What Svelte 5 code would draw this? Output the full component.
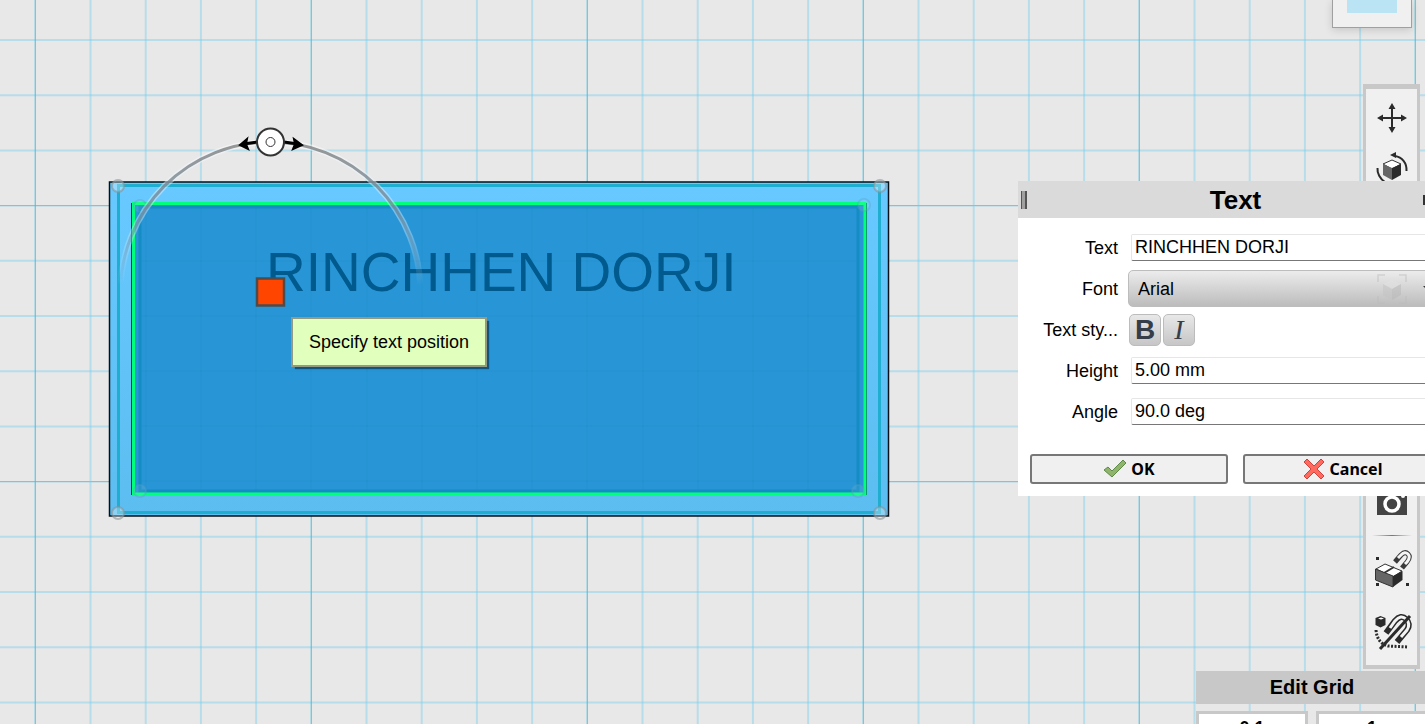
<script>
  // Grid spacing of the work plane; every fifth line is a major one
  const STEP = 55.2
  const cols = Array.from({ length: 48 }, (_, i) => ({ p: 35.3 + i * STEP, major: i % 5 === 0 }))
  const rows = Array.from({ length: 32 }, (_, i) => ({ p: 40 + i * STEP, major: i % 5 === 3 }))

  const outerKnobs = [[118, 186], [880, 186], [118, 513], [880, 513]]
  const innerKnobs = [[140, 206], [864, 205], [140, 491], [858, 491]]

  let text = $state('RINCHHEN DORJI')
  let font = $state('Arial')
  let height = $state('5.00 mm')
  let angle = $state('90.0 deg')
  let bold = $state(false)
  let italic = $state(false)
  let gridMinor = $state('0.1')
  let gridMajor = $state('1')
</script>

<main>
  <svg class="canvas" role="img" aria-label="Sketch plane">
    <defs>
      <linearGradient id="rim" x1="0" y1="0" x2="0" y2="1">
        <stop offset="0" stop-color="#67c9ff" />
        <stop offset="1" stop-color="#5cbdf1" />
      </linearGradient>
      <linearGradient id="arcDark" gradientUnits="userSpaceOnUse" x1="0" y1="142" x2="0" y2="285">
        <stop offset="0" stop-color="#8c8c8c" stop-opacity="0.9" />
        <stop offset="0.5" stop-color="#5d7484" stop-opacity="0.6" />
        <stop offset="1" stop-color="#5a7f98" stop-opacity="0" />
      </linearGradient>
      <linearGradient id="arcLight" gradientUnits="userSpaceOnUse" x1="0" y1="142" x2="0" y2="285">
        <stop offset="0" stop-color="#fff" stop-opacity="0.5" />
        <stop offset="0.6" stop-color="#cfeaff" stop-opacity="0.45" />
        <stop offset="1" stop-color="#cfeaff" stop-opacity="0" />
      </linearGradient>
    </defs>

    <!-- Grid -->
    {#each rows as r}
      <line x1="0" x2="100%" y1={r.p} y2={r.p} class="grid" class:grid--major={r.major} />
    {/each}
    {#each cols as c}
      <line y1="0" y2="100%" x1={c.p} x2={c.p} class="grid" class:grid--major={c.major} />
    {/each}

    <!-- Plate -->
    <rect x="109.5" y="182" width="779" height="334" fill="url(#rim)" stroke="#061018" stroke-width="1.5" />
    <rect x="118.5" y="185.5" width="761" height="327" fill="none" stroke="#20aed0" stroke-width="3" />
    {#each outerKnobs as [x, y]}
      <circle cx={x} cy={y} r="6" class="knob" />
    {/each}

    <!-- Pocket -->
    <rect x="132" y="204" width="734" height="290" fill="#2896d6" stroke="#0b3a63" stroke-width="2" />
    <rect x="140" y="207" width="718" height="284" fill="none" stroke="#148cc4" stroke-width="3" />
    {#each [146, 201, 256, 311, 367, 422, 477, 532, 587, 643, 698, 753, 808] as x}
      <line x1={x} x2={x} y1="208" y2="490" class="ghost" />
    {/each}
    {#each [261, 316, 371, 426, 481] as y}
      <line x1="141" x2="857" y1={y} y2={y} class="ghost" />
    {/each}
    <rect x="133.5" y="203.5" width="731.5" height="290.5" fill="none" stroke="#00ff7b" stroke-width="3" />
    {#each innerKnobs as [x, y]}
      <circle cx={x} cy={y} r="6" class="knob knob--faint" />
    {/each}

    <text x="266" y="291" class="sketch-text">{text}</text>

    <!-- Rotation arc with its handle -->
    <path d="M120.5 292A150 150 0 0 1 420.5 292" fill="none" stroke="url(#arcLight)" stroke-width="6" />
    <path d="M120.5 292A150 150 0 0 1 420.5 292" fill="none" stroke="url(#arcDark)" stroke-width="3" />
    <g stroke="#000" stroke-width="3" fill="none">
      <path d="M257 142L243 144M284 142L298 144" />
      <path d="M247 139L240 145L248 149L246 144zM294 139L302 145L293 149L295 144z" fill="#000" stroke-width="2" />
    </g>
    <circle cx="270.5" cy="142" r="13.5" fill="#fff" stroke="#333" stroke-width="2" />
    <circle cx="270.5" cy="142" r="4.5" fill="none" stroke="#333" />

    <rect x="257" y="278.5" width="27" height="27" fill="#ff4500" stroke="#4c4c4c" stroke-width="2.5" />
  </svg>

  <div class="hint" role="tooltip">Specify text position</div>

  <div class="view-cube"><span></span></div>

  <nav class="tools" aria-label="Tools">
    <div class="tool-group">
      <button aria-label="Move">
        <svg viewBox="0 0 36 36">
          <path d="M18 6V30M6 18H30" stroke="#2b2b2b" stroke-width="2" />
          <path d="M18 3l-3.5 6h7zM18 33l-3.5-6h7zM3 18l6-3.5v7zM33 18l-6-3.5v7z" fill="#2b2b2b" />
        </svg>
      </button>
      <button aria-label="Rotate">
        <svg viewBox="0 0 36 36">
          <path d="M3.5 16C3 21 6 27 11 30M32.5 19C33 11 28 5 21 4" fill="none" stroke="#2b2b2b" stroke-width="2" />
          <path d="M16 3l6-3v6z" fill="#2b2b2b" />
          <path d="M9 12l9-4 9 4-9 5z" fill="#fff" stroke="#333" />
          <path d="M9 12l9 4v12l-9-5z" fill="#666" />
          <path d="M27 12l-9 4v12l9-5z" fill="#2b2b2b" />
        </svg>
      </button>
    </div>
    <div class="tool-group">
      <button aria-label="Camera">
        <svg viewBox="0 0 36 36">
          <path d="M3 7h8l3-4h8l3 4h8v25H3z" fill="#444" />
          <circle cx="18" cy="21" r="7" fill="none" stroke="#fff" stroke-width="3.5" />
          <circle cx="29" cy="13" r="2" fill="#fff" />
        </svg>
      </button>
      <hr />
      <button aria-label="Snap to body">
        <svg viewBox="0 0 36 36">
          <path d="M2 17l9-5 17 7-9 6z" fill="#fff" stroke="#333" />
          <path d="M10 21l10-6" stroke="#333" stroke-width="2" />
          <path d="M1.5 17L19 24V35L1.5 28z" fill="#666" stroke="#333" />
          <path d="M28.5 19L19 24V35l9.5-7z" fill="#2b2b2b" />
          <path d="M21 10L27 3Q31-1 34 2T33 10L28 16" fill="none" stroke="#3a3a3a" stroke-width="5" />
          <path d="M24 6L27 3Q31-1 34 2T33 10L31 12" fill="none" stroke="#f4f4f4" stroke-width="3" />
          <path d="M2 5h3v3H2zM2 31h3v3H2zM32 31h3v3h-3z" fill="#2b2b2b" />
        </svg>
      </button>
      <button aria-label="Disable snapping">
        <svg viewBox="0 0 36 36">
          <path d="M1.5 4l5-2 5 2v7l-5 2.5-5-2.5z" fill="#2b2b2b" />
          <path d="M4 4.5l3-1 3 1-3 1z" fill="#fff" />
          <path d="M2 16Q3 29 14 32L34 33" fill="none" stroke="#2b2b2b" stroke-width="3" stroke-dasharray="2 1.5" />
          <path d="M12 19L21 7Q27 0 32 5T33 16L23 28" fill="none" stroke="#2b2b2b" stroke-width="6" />
          <path d="M16 14L21 7Q27 0 32 5T33 16L27 23" fill="none" stroke="#f4f4f4" stroke-width="3" />
          <path d="M6 35L36 2" stroke="#2b2b2b" stroke-width="3" />
        </svg>
      </button>
    </div>
  </nav>

  <form class="panel" onsubmit={e => e.preventDefault()}>
    <header>
      <i class="grip"></i>
      <h2>Text</h2>
      <i class="pin"></i>
    </header>

    <div class="fields">
      <label for="t-text">Text</label>
      <input id="t-text" bind:value={text} />

      <label for="t-font">Font</label>
      <div class="select-wrap">
        <select id="t-font" bind:value={font}>
          <option>Arial</option>
        </select>
        <svg class="ghost-cube" viewBox="0 0 30 30">
          <path d="M1 8V1h7M22 1h7v7M29 22v7h-7M8 29H1v-7" fill="none" stroke="#bdbdbd" stroke-width="1.5" />
          <path d="M6 10l9-4 9 4-9 5z" fill="#e2e2e2" />
          <path d="M6 10l9 5v11l-9-5z" fill="#c4c4c4" />
          <path d="M24 10l-9 5v11l9-5z" fill="#b8b8b8" />
        </svg>
        <i class="caret"></i>
      </div>

      <span class="label">Text sty...</span>
      <div class="styles">
        <button type="button" class="b" aria-pressed={bold} onclick={() => bold = !bold}>B</button>
        <button type="button" class="i" aria-pressed={italic} onclick={() => italic = !italic}>I</button>
      </div>

      <label for="t-height">Height</label>
      <input id="t-height" bind:value={height} />

      <label for="t-angle">Angle</label>
      <input id="t-angle" bind:value={angle} />
    </div>

    <footer>
      <button type="submit">
        <svg viewBox="0 0 24 20">
          <path d="M1 11l4-3 4 4L20 1l3 3L9 18z" fill="#8fb56c" stroke="#5d8a45" />
        </svg>
        OK
      </button>
      <button type="button">
        <svg viewBox="0 0 24 20">
          <path d="M5 0l7 7 7-7 3 3-7 7 7 7-3 3-7-7-7 7-3-3 7-7-7-7z" fill="#ff6a60" stroke="#d2423c" />
        </svg>
        Cancel
      </button>
    </footer>
  </form>

  <section class="edit-grid">
    <h3>Edit Grid</h3>
    <div class="cells">
      <input aria-label="Minor step" bind:value={gridMinor} />
      <input aria-label="Major step" bind:value={gridMajor} />
    </div>
  </section>
</main>

<style>
  :global(body) { margin: 0; }

  main {
    position: relative;
    height: 100vh;
    overflow: hidden;
    background: #e8e8e8;
    font-family: "Liberation Sans", Arial, sans-serif;
    font-size: 18px;
    color: #000;
  }

  button, input, select {
    font: inherit;
    color: inherit;
    box-sizing: border-box;
    margin: 0;
  }

  /* Canvas */
  .canvas {
    display: block;
    width: 100%;
    height: 100%;
  }

  .grid        { stroke: #74cdec; stroke-opacity: 0.42; stroke-width: 2; }
  .grid--major { stroke: #3fbde0; stroke-opacity: 0.7; stroke-width: 1.4; }
  .ghost       { stroke: #1d86c4; stroke-opacity: 0.2; stroke-width: 2; }

  .knob        { fill: #fff; fill-opacity: 0.3; stroke: #8a9298; stroke-opacity: 0.6; stroke-width: 2; }
  .knob--faint { fill-opacity: 0.08; stroke: #5b9fc0; stroke-opacity: 0.35; }

  .sketch-text {
    font-size: 55px;
    fill: #005a8d;
  }

  .hint {
    position: absolute;
    left: 291px;
    top: 317px;
    padding: 12px 16px;
    border: 2px solid #949b82;
    background: #e1ffbd;
    box-shadow: 3px 3px 1px -1px rgba(0, 40, 70, 0.6);
    line-height: 22px;
    white-space: nowrap;
  }

  .view-cube {
    position: absolute;
    right: 13px;
    top: 0;
    padding: 0 14px 14px;
    border: 1px solid #a0a0a0;
    border-top: 0;
    background: #f0f0f0;
    box-shadow: 0 2px 8px rgba(0, 0, 0, 0.15);
  }

  .view-cube span {
    display: block;
    width: 50px;
    height: 13px;
    background: #bae4f3;
  }

  /* Toolbar */
  .tools {
    position: absolute;
    right: 5px;
    top: 84px;
    box-sizing: border-box;
    width: 57px;
    height: 585px;
    padding: 11px 0 15px;
    border: 4px solid #c8c8c8;
    border-width: 5px 3px 4px;
    background: #f0f0f0;
    display: flex;
    flex-direction: column;
    justify-content: space-between;
  }

  .tool-group {
    display: flex;
    flex-direction: column;
    align-items: center;
    gap: 16px;
  }

  .tool-group:last-child button:last-child { margin-top: 10px; }

  .tools button {
    padding: 0;
    border: 0;
    background: none;
  }

  .tools svg {
    display: block;
    width: 36px;
    height: 36px;
    overflow: visible;
  }

  .tools hr {
    width: 40px;
    height: 1px;
    margin: 0;
    border: 0;
    background: linear-gradient(90deg, transparent, #777, transparent);
  }

  /* Text panel: runs past the right edge of the window */
  .panel {
    position: absolute;
    right: -28px;
    top: 181px;
    width: 435px;
    background: #fff;
  }

  .panel header {
    display: grid;
    grid-template-columns: 28px 1fr 28px;
    align-items: center;
    height: 37px;
    padding: 0 2px;
    background: #dadada;
  }

  .panel h2 {
    margin: 0;
    font-size: 26px;
    line-height: 36px;
    text-align: center;
  }

  .grip {
    width: 3px;
    height: 18px;
    margin-left: 1px;
    border: solid #555;
    border-width: 0 2px 0 1px;
    background: #a0a0a0;
  }

  .pin {
    height: 10px;
    background: #333;
  }

  .fields {
    display: grid;
    grid-template-columns: 100px 1fr;
    grid-auto-rows: 41px;
    align-items: center;
    column-gap: 13px;
    padding: 9px 12px 0 0;
  }

  label, .label {
    text-align: right;
    line-height: 24px;
  }

  .fields input {
    width: 100%;
    height: 27px;
    padding: 0 3px;
    border: 1px solid #e6e6e6;
    border-bottom-color: #777;
    border-radius: 2px;
    background: #fff;
  }

  .select-wrap {
    display: flex;
    align-items: center;
    position: relative;
    margin-left: -3px;
  }

  select {
    appearance: none;
    width: 100%;
    height: 37px;
    padding: 0 9px;
    border: 1px solid #bdbdbd;
    border-radius: 5px;
    background: linear-gradient(#ececec, #bcbcbc);
  }

  .ghost-cube {
    position: absolute;
    right: 34px;
    width: 30px;
    height: 30px;
    opacity: 0.5;
  }

  .caret {
    position: absolute;
    right: 8px;
    border: 5px solid transparent;
    border-top-color: #333;
    border-bottom: 0;
  }

  .styles {
    display: flex;
    gap: 2px;
    margin-left: -2px;
  }

  .styles button {
    width: 32px;
    height: 32px;
    padding: 0;
    border: 1px solid #bcbcbc;
    border-radius: 5px;
    background: linear-gradient(#e8e8e8, #c6c6c6);
    color: #363d49;
    font-size: 28px;
    line-height: 26px;
  }

  .styles .b { font-weight: bold; }

  .styles .i {
    font-family: "Liberation Serif", "Times New Roman", serif;
    font-style: italic;
  }

  .panel footer {
    display: flex;
    gap: 15px;
    padding: 22px 12px 12px;
  }

  .panel footer button {
    flex: 1;
    display: flex;
    align-items: center;
    justify-content: center;
    gap: 4px;
    height: 30px;
    padding: 0;
    border: 2px solid #777;
    border-radius: 3px;
    background: #f0f0f0;
    font: bold 16px/22px "Noto Sans", sans-serif;
  }

  .panel footer svg {
    width: 24px;
    height: 20px;
  }

  /* Edit Grid */
  .edit-grid {
    position: absolute;
    right: -3px;
    bottom: -22px;
    width: 232px;
  }

  .edit-grid h3 {
    margin: 0 0 7px;
    background: #c8c8c8;
    font-size: 20px;
    line-height: 33px;
    text-align: center;
  }

  .cells {
    display: flex;
    gap: 8px;
  }

  .cells input {
    flex: 1;
    min-width: 0;
    height: 35px;
    padding: 0;
    border: 3px solid #c8c8c8;
    background: #fff;
    font-weight: bold;
    text-align: center;
  }
</style>
